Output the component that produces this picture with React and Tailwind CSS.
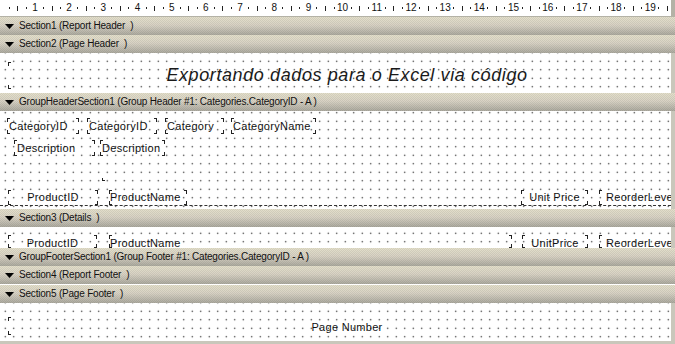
import React from "react";

const BAR =
  "[background:repeating-conic-gradient(#00000012_0_25%,#0000_0_50%)_0_0/2px_2px,linear-gradient(#e4e0cb,#d9d3c5_45%,#acaa9f)]";
const GRID =
  "bg-white bg-[radial-gradient(#1c1c1c_0.65px,transparent_1px)] bg-[size:8.5px_8.5px]";

function Bar({ children }) {
  return (
    <div className={`flex h-[18px] shrink-0 items-center gap-[5px] pl-[5px] text-[10px] tracking-[-0.2px] text-[#111] ${BAR}`}>
      <svg width="9" height="5" viewBox="0 0 9 5" className="shrink-0">
        <polygon points="0,0 9,0 4.5,5" fill="#000" />
      </svg>
      <span className="whitespace-pre leading-none">{children}</span>
    </div>
  );
}

function Ctl({ className = "", children }) {
  return (
    <div className={`relative shrink-0 whitespace-pre ${className}`}>
      <span className="absolute left-0 top-0 h-[4px] w-[3px] border-l border-t border-[#222]" />
      <span className="absolute right-0 top-0 h-[4px] w-[3px] border-r border-t border-[#222]" />
      <span className="absolute bottom-0 left-0 h-[4px] w-[3px] border-b border-l border-[#222]" />
      <span className="absolute bottom-0 right-0 h-[4px] w-[3px] border-b border-r border-[#222]" />
      {children}
    </div>
  );
}

function Ruler() {
  const cells = Array.from({ length: 19 }, (_, i) => i + 1);
  return (
    <div className="flex h-[17px] shrink-0 overflow-hidden border-b border-r-[4px] border-[#b4b2a6] bg-white pl-[5px] text-[10px] text-[#111]">
      {cells.map((n) => (
        <div key={n} className="flex w-[34.2px] shrink-0 items-center">
          <div className="flex w-1/4 justify-center">
            <span className="h-[2px] w-px bg-[#222]" />
          </div>
          <div className="flex w-1/4 justify-center">
            <span className="h-[5px] w-px bg-[#222]" />
          </div>
          <div className="flex w-1/4 justify-center">
            <span className="h-[2px] w-px bg-[#222]" />
          </div>
          <div className="flex w-1/4 justify-center leading-none">{n}</div>
        </div>
      ))}
      <div className="flex w-[17px] shrink-0 items-center">
        <div className="flex w-1/2 justify-center">
          <span className="h-[2px] w-px bg-[#222]" />
        </div>
        <div className="flex w-1/2 justify-center">
          <span className="h-[5px] w-px bg-[#222]" />
        </div>
      </div>
    </div>
  );
}

export default function App() {
  return (
    <div
      className="flex h-[344px] w-[675px] flex-col overflow-hidden bg-[#c9c7bb] text-[11px] text-[#111]"
      style={{ fontFamily: '"Liberation Sans", Arial, sans-serif' }}
    >
      <Ruler />
      <Bar>{"Section1 (Report Header  )"}</Bar>
      <Bar>{"Section2 (Page Header  )"}</Bar>

      <div className={`h-[40px] shrink-0 overflow-hidden border-r-[4px] border-[#c9c7bb] pt-[9px] pl-[8px] ${GRID} bg-[position:1px_4px]`}>
        <Ctl className="flex h-[27px] w-[678px] items-center justify-center">
          <span className="text-[18px] italic tracking-[0.6px] text-[#1a1a1a]">
            Exportando dados para o Excel via código
          </span>
        </Ctl>
      </div>

      <Bar>{"GroupHeaderSection1 (Group Header #1: Categories.CategoryID - A )"}</Bar>

      <div className={`flex h-[98px] shrink-0 flex-col overflow-hidden border-r-[4px] border-[#c9c7bb] pt-[7px] tracking-[0.3px] ${GRID} bg-[position:1px_6px]`}>
        <div className="flex h-[16px] items-center leading-[16px]">
          <Ctl className="ml-[7px] w-[72px] pl-[2px]">CategoryID</Ctl>
          <Ctl className="ml-[8px] w-[70px] pl-[2px]">CategoryID</Ctl>
          <Ctl className="ml-[8px] w-[59px] pl-[2px]">Category</Ctl>
          <Ctl className="ml-[7px] w-[85px] pl-[2px]">CategoryName</Ctl>
        </div>
        <div className="mt-[6px] flex h-[16px] items-center leading-[16px]">
          <Ctl className="ml-[14px] w-[81px] pl-[3px]">Description</Ctl>
          <Ctl className="ml-[5px] w-[65px] pl-[2px]">Description</Ctl>
        </div>
        <div className="ml-[102px] mt-[22px] h-[3px] w-[3px] border-b border-l border-[#222]" />
        <div className="mt-[9px] flex h-[16px] items-center border-b border-dashed border-[#333] leading-[15px]">
          <Ctl className="ml-[8px] w-[90px] text-center">ProductID</Ctl>
          <Ctl className="ml-[11px] w-[78px] pl-[1px]">ProductName</Ctl>
          <Ctl className="ml-[334px] w-[67px] text-center">Unit Price</Ctl>
          <Ctl className="ml-[11px] w-[90px] pl-[7px]">ReorderLevel</Ctl>
        </div>
      </div>

      <Bar>{"Section3 (Details  )"}</Bar>

      <div className={`flex h-[21px] shrink-0 items-start overflow-hidden border-r-[4px] border-[#c9c7bb] pt-[8px] tracking-[0.3px] ${GRID} bg-[position:1px_2px]`}>
        <div className="flex h-[13px] items-center leading-[16px]">
          <Ctl className="ml-[8px] h-[13px] w-[89px] text-center">ProductID</Ctl>
          <Ctl className="ml-[12px] h-[13px] w-[403px] pl-[1px]">ProductName</Ctl>
          <Ctl className="ml-[10px] h-[13px] w-[66px] text-center">UnitPrice</Ctl>
          <Ctl className="ml-[11px] h-[13px] w-[90px] pl-[7px]">ReorderLevel</Ctl>
        </div>
      </div>

      <Bar>{"GroupFooterSection1 (Group Footer #1: Categories.CategoryID - A )"}</Bar>
      <Bar>{"Section4 (Report Footer  )"}</Bar>
      <div className="h-px shrink-0 bg-white" />
      <Bar>{"Section5 (Page Footer  )"}</Bar>

      <div className={`h-[38px] shrink-0 overflow-hidden border-r-[4px] border-[#c9c7bb] pt-[14px] pl-[8px] ${GRID} bg-[position:1px_4px]`}>
        <Ctl className="flex h-[18px] w-[678px] items-center justify-center pt-[2px]">
          <span className="tracking-[0.3px]">Page Number</span>
        </Ctl>
      </div>
    </div>
  );
}
